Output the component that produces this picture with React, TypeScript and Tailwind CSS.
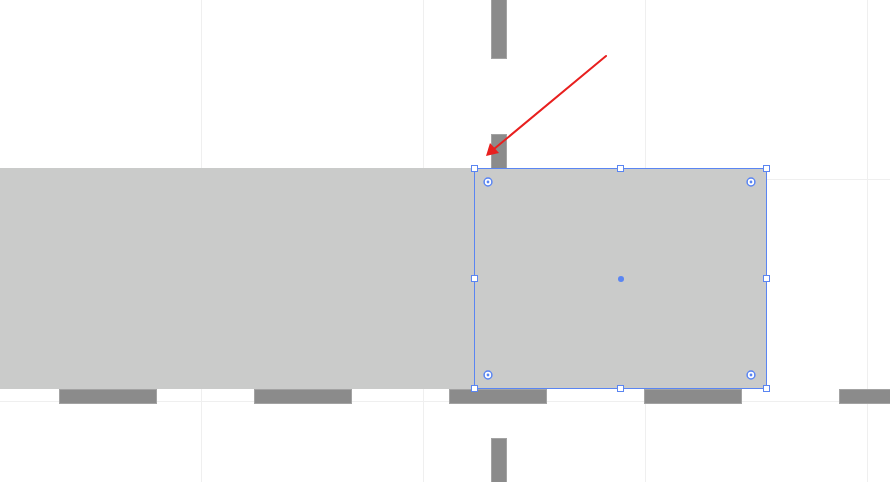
const DASH = "border border-[#a3a3a3] bg-[#8b8b8b]";
const HANDLE = "h-[7px] w-[7px] border border-[#5a85f2] bg-white";

function RadiusKnob() {
  return (
    <svg width="10" height="10" viewBox="0 0 10 10">
      <circle cx="5" cy="5" r="3.9" fill="#fff" stroke="#5a85f2" strokeWidth="1.5" />
      <circle cx="5" cy="5" r="1.4" fill="#5a85f2" />
    </svg>
  );
}

function HandleRow({ middle = true }: { middle?: boolean }) {
  return (
    <div className="flex justify-between">
      <div className={HANDLE} />
      <div className={middle ? HANDLE : "h-[7px] w-[7px]"} />
      <div className={HANDLE} />
    </div>
  );
}

export default function App() {
  return (
    <div className="relative h-[482px] w-[890px] overflow-hidden bg-white">
      {/* canvas grid */}
      <div className="absolute inset-0 flex gap-[221px] pl-[201px]">
        {[0, 1, 2, 3].map((i) => (
          <div key={i} className="h-full w-px bg-[#efefef]" />
        ))}
      </div>
      <div className="absolute inset-0 flex flex-col gap-[221px] pt-[179px]">
        {[0, 1].map((i) => (
          <div key={i} className="h-px w-full bg-[#efefef]" />
        ))}
      </div>

      {/* dashed guides */}
      <div className="absolute left-0 top-[389px] flex gap-[97px] pl-[59px]">
        {[0, 1, 2, 3, 4].map((i) => (
          <div key={i} className={`h-[15px] w-[98px] shrink-0 ${DASH}`} />
        ))}
      </div>
      <div className="absolute left-[491px] top-[-18px] flex flex-col gap-[75px]">
        {[0, 1, 2, 3].map((i) => (
          <div key={i} className={`h-[77px] w-[16px] shrink-0 ${DASH}`} />
        ))}
      </div>

      {/* shapes */}
      <div className="absolute left-0 top-[168px] flex h-[221px]">
        <div className="w-[474px] bg-[#cacbca]" />
        <div className="relative w-[293px] border border-[#5a85f2] bg-[#cacbca]">
          <div className="absolute bottom-[8px] left-[8px] right-[10px] top-[8px] flex flex-col justify-between">
            <div className="flex justify-between">
              <RadiusKnob />
              <RadiusKnob />
            </div>
            <div className="flex justify-between">
              <RadiusKnob />
              <RadiusKnob />
            </div>
          </div>
          <div className="absolute inset-0 flex items-center justify-center">
            <div className="h-[6px] w-[6px] rounded-full bg-[#5a85f2]" />
          </div>
          <div className="absolute inset-[-4px] flex flex-col justify-between">
            <HandleRow />
            <HandleRow middle={false} />
            <HandleRow />
          </div>
        </div>
      </div>

      {/* annotation arrow */}
      <svg className="absolute left-0 top-0" width="890" height="482">
        <line x1="606" y1="56" x2="494" y2="149" stroke="#e8201f" strokeWidth="2" strokeLinecap="round" />
        <polygon points="486,156 490,143 499,153" fill="#e8201f" />
      </svg>
    </div>
  );
}
